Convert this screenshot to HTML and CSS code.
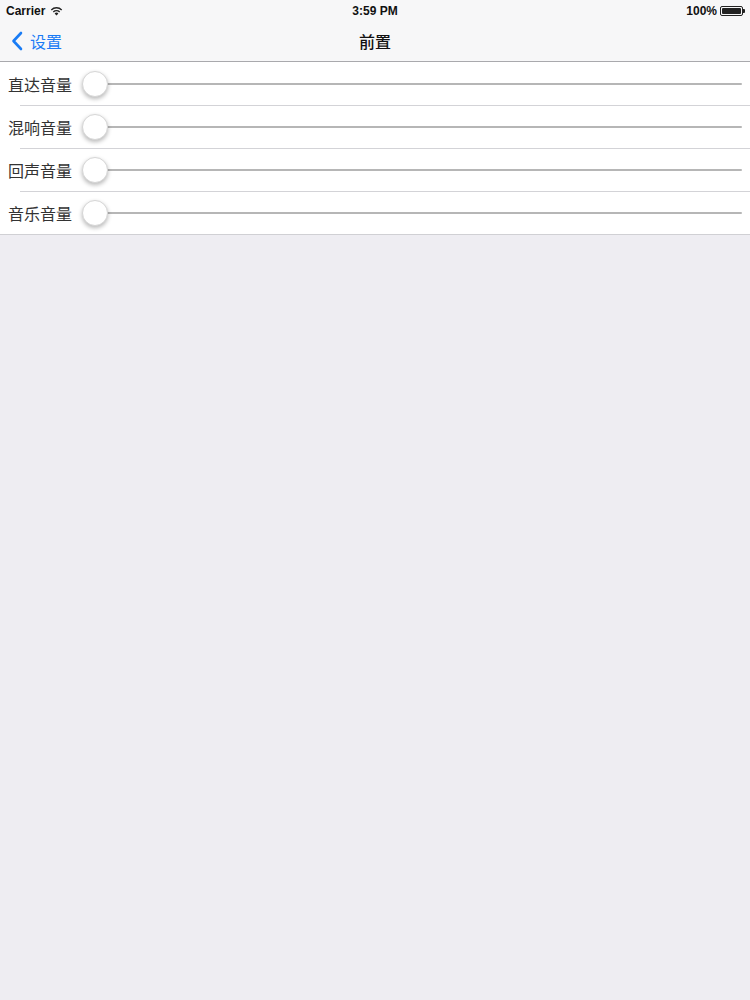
FILE: index.html
```html
<!DOCTYPE html>
<html lang="zh-CN">
<head>
    <meta charset="UTF-8">
    <meta name="viewport" content="width=device-width, initial-scale=1.0">
    <title>前置</title>
    <link rel="stylesheet" href="styles.css">
</head>
<body>
    <!-- 状态栏 -->
    <div class="status-bar">
        <div class="sb-left">
            <span>Carrier</span>
            <svg class="wifi" width="13" height="10" viewBox="0 0 13 10">
                <path d="M6.5 9.5 L4.6 7.4 A2.8 2.8 0 0 1 8.4 7.4 Z" fill="#222"/>
                <path d="M3.3 6 A4.7 4.7 0 0 1 9.7 6" stroke="#222" stroke-width="1.4" fill="none"/>
                <path d="M1.3 3.9 A7.5 7.5 0 0 1 11.7 3.9" stroke="#222" stroke-width="1.4" fill="none"/>
            </svg>
        </div>
        <div class="sb-time">3:59 PM</div>
        <div class="sb-right">
            <span>100%</span>
            <span class="battery"><span class="battery-fill"></span></span>
            <span class="battery-tip"></span>
        </div>
    </div>

    <!-- 导航栏 -->
    <div class="nav-bar">
        <a class="nav-back" href="#">
            <svg width="12" height="20" viewBox="0 0 12 20">
                <path d="M10 2 L2.5 10 L10 18" stroke="#1a7cf5" stroke-width="2.6" fill="none" stroke-linecap="round" stroke-linejoin="round"/>
            </svg>
            <span>设置</span>
        </a>
        <div class="nav-title">前置</div>
    </div>

    <!-- 音量列表 -->
    <div class="list">
        <div class="row">
            <span class="row-label">直达音量</span>
            <div class="slider"><div class="track"></div><div class="thumb"></div></div>
        </div>
        <div class="row">
            <span class="row-label">混响音量</span>
            <div class="slider"><div class="track"></div><div class="thumb"></div></div>
        </div>
        <div class="row">
            <span class="row-label">回声音量</span>
            <div class="slider"><div class="track"></div><div class="thumb"></div></div>
        </div>
        <div class="row">
            <span class="row-label">音乐音量</span>
            <div class="slider"><div class="track"></div><div class="thumb"></div></div>
        </div>
    </div>
</body>
</html>
```

FILE: styles.css
```css
* { padding: 0; margin: 0; box-sizing: border-box; }
body { background: #eeedf2; font-family: "Liberation Sans", "Noto Sans CJK SC", sans-serif; height: 100vh; }

.status-bar { height: 20px; background: #f7f7f8; display: flex; align-items: center; justify-content: space-between; padding: 1px 5px 0 6px; font-size: 12px; font-weight: bold; color: #111; position: relative; }
.sb-left { display: flex; align-items: center; gap: 5px; }
.sb-time { position: absolute; left: 0; right: 0; text-align: center; pointer-events: none; }
.sb-right { display: flex; align-items: center; gap: 3px; }
.battery { width: 23px; height: 10px; border: 1px solid #222; border-radius: 2px; padding: 1px; display: inline-flex; }
.battery-fill { flex: 1; background: #222; border-radius: 1px; }
.battery-tip { width: 2px; height: 4px; background: #222; margin-left: -3px; border-radius: 0 1px 1px 0; }

.nav-bar { height: 42px; background: #f7f7f8; border-bottom: 1px solid #a9a9ad; display: flex; align-items: center; position: relative; }
.nav-back { display: flex; align-items: center; gap: 7px; padding-left: 11px; color: #1a7cf5; text-decoration: none; font-family: "Noto Sans CJK SC", sans-serif; font-size: 16px; }
.nav-title { position: absolute; left: 0; right: 0; text-align: center; font-family: "Noto Sans CJK SC", sans-serif; font-size: 16px; font-weight: 500; color: #111; pointer-events: none; }

.list { background: #fff; border-bottom: 1px solid #d0d0d4; }
.row { height: 43px; display: flex; align-items: center; padding: 0 8px; position: relative; }
.row + .row::before { content: ""; position: absolute; top: 0; left: 20px; right: 0; height: 1px; background: #d3d3d7; }
.row-label { font-family: "Noto Sans CJK SC", sans-serif; font-size: 16px; color: #333; width: 74px; }
.slider { flex: 1; height: 28px; position: relative; display: flex; align-items: center; }
.track { flex: 1; height: 2px; background: #b6b6b6; border-radius: 1px; margin-left: 12px; }
.thumb { position: absolute; left: 0; top: 1px; width: 26px; height: 26px; border-radius: 50%; background: #fff; border: 1px solid #d6d6d6; box-shadow: 0 2px 4px rgba(0,0,0,0.28); }
```
